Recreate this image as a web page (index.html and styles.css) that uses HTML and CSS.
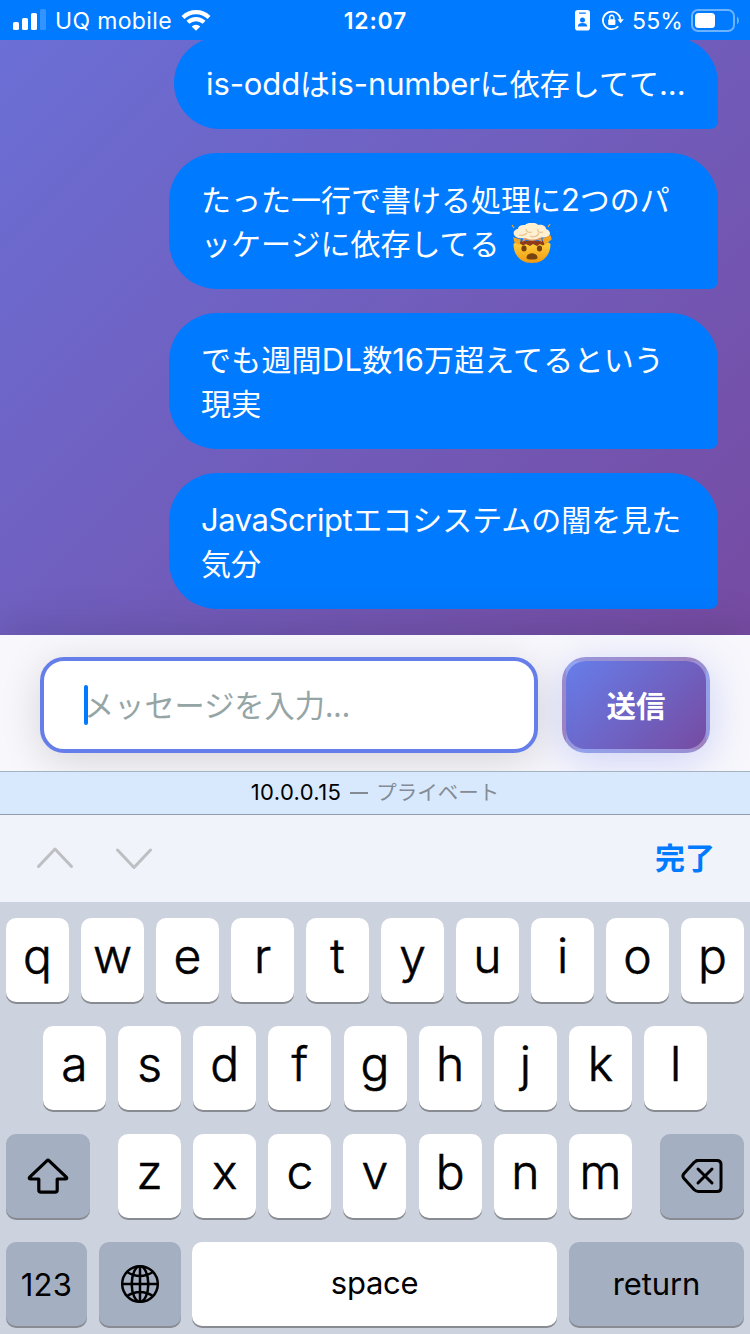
FILE: index.html
```html
<!DOCTYPE html>
<html lang="ja">
<head>
<meta charset="utf-8">
<title>Chat</title>
<link rel="stylesheet" href="styles.css">
</head>
<body>
<div class="phone">
  <header class="status">
    <div class="status-left">
      <svg class="signal" width="34" height="22" viewBox="0 0 34 22" fill="#fff"><rect x="0" y="13" width="6" height="8" rx="1.6"/><rect x="9" y="9" width="6" height="12" rx="1.6"/><rect x="18" y="4" width="6" height="17" rx="1.6"/><rect x="27" y="0" width="6" height="21" rx="1.6" opacity=".2"/></svg>
      <span class="carrier">UQ mobile</span>
      <svg class="wifi" width="30" height="23" viewBox="0 0 30 23" fill="none" stroke="#fff" stroke-width="4.2"><path d="M2 8.4A18.7 18.7 0 0 1 28 8.4"/><path d="M6.9 13.3A11.7 11.7 0 0 1 23.1 13.3"/><path d="M10.7 17.4A6.2 6.2 0 0 1 19.3 17.4L15 21.8Z" fill="#fff" stroke="none"/></svg>
    </div>
    <span class="time">12:07</span>
    <div class="status-right">
      <svg class="card-icon" width="15" height="21" viewBox="0 0 15 21"><rect width="15" height="20.5" rx="2.8" fill="#fff"/><path d="M4.6 3.1h5.8" stroke="#007aff" stroke-width="1.4" stroke-linecap="round"/><circle cx="7.5" cy="10" r="2.5" fill="#007aff"/><path d="M2.8 16.6c0-2.7 2-3.6 4.7-3.6s4.7.9 4.7 3.6Z" fill="#007aff"/></svg>
      <svg class="lock-icon" width="22" height="21" viewBox="0 0 22 21" fill="none" stroke="#fff" stroke-width="1.8"><path d="M16.200 16.400A8.800 8.800 0 1 1 18.500 9.500"/><path d="M15.500 9.200H21.800L18.600 13.200Z" fill="#fff" stroke="none"/><rect x="6.200" y="9.200" width="7.200" height="5.800" rx="1" fill="#fff" stroke="none"/><path d="M7.700 9.500V7.600a2.100 2.300 0 0 1 4.200 0v1.900" stroke-width="1.4"/></svg>
      <span class="percent">55%</span>
      <svg class="battery" width="48" height="23" viewBox="0 0 48 23"><rect x="1" y="1" width="42" height="21" rx="6" fill="none" stroke="#fff" stroke-opacity=".42" stroke-width="2"/><rect x="4" y="4" width="20" height="15" rx="3.5" fill="#fff"/><path d="M46 7.5c2.5 1.5 2.5 6.5 0 8Z" fill="#fff" opacity=".42"/></svg>
    </div>
  </header>

  <main class="chat">
    <div class="bubble bubble-first"><span class="latin">is-odd</span>は<span class="latin">is-number</span>に依存してて<span class="latin">...</span></div>
    <div class="bubble">たった一行で書ける処理に<span class="latin">2</span>つのパ<br>ッケージに依存してる<svg class="emoji" role="img" aria-label="🤯" viewBox="0 0 42 42"><defs><linearGradient id="face" x2="0" y2="1"><stop stop-color="#ffd13b"/><stop offset="1" stop-color="#f09a13"/></linearGradient></defs><path d="M2.500 21Q5 18 9 20h24q4-2 6.500 1c0 12-8 19-18.500 19S2.500 33 2.500 21Z" fill="url(#face)"/><path d="M8 20l3-2.500 4 .5 6-1 6 1 4-.5 4 2.500-3 2.500-3-1.500-3 2-4-2-3 2-4-2-3 1.500Z" fill="#8d3b1a"/><path d="M13 13h17l1 6-4-2-6 1-6-1-4 2Z" fill="#d99a6a"/><path d="M5 14c-5-4-1-8 2-8 0-4 5-4 7-4 3-3 11-3 13 0 4-1 8 1 8 4 4 1 6 6 1 8-3 1-6 0-8 1-4 2-10 2-13 0-3 0-7 1-10-1Z" fill="#fff0d2"/><path d="M8 12c3 1 6 0 8-2m3 3c4 2 8 0 9-3M15 6c0 3 3 4 6 3m6-3c-1 3 2 4 5 3" fill="none" stroke="#e6c38f" stroke-width="1.200"/><path d="M3 15l6 2-1 4-4-2Zm36-2-7 3 2 5 6-5ZM1 2l2 3m36-4-2 3" fill="#f4a521" stroke="#f4a521" stroke-width="1.300"/><ellipse cx="13" cy="25.500" rx="2.600" ry="3" fill="#76410f"/><ellipse cx="28.500" cy="25.500" rx="2.600" ry="3" fill="#76410f"/><path d="M15.500 35c0-6.500 11-6.500 11 0 0 2-11 2-11 0Z" fill="#77420f"/></svg></div>
    <div class="bubble bubble-loose">でも週間<span class="latin l-dl">DL</span>数<span class="latin">16</span>万超えてるという<br>現実</div>
    <div class="bubble"><span class="latin l-js">JavaScript</span>エコシステムの闇を見た<br>気分</div>
  </main>

  <section class="composer">
    <div class="field"><span class="placeholder">メッセージを入力...</span><i class="caret"></i></div>
    <button class="send">送信</button>
  </section>

  <div class="address"><span class="host">10.0.0.15</span><span class="private"><i class="dash"></i>プライベート</span></div>

  <div class="accessory">
    <svg width="118" height="24" viewBox="0 0 118 24" fill="none" stroke="#bdbfc2" stroke-width="3" stroke-linecap="round" stroke-linejoin="round"><path d="M2.500 19.500 19 2l16.500 17.500M81.500 3 98 20.500 114.500 3"/></svg>
    <span class="done">完了</span>
  </div>

  <div class="keyboard">
    <div class="row"><b class="key">q</b><b class="key">w</b><b class="key">e</b><b class="key">r</b><b class="key">t</b><b class="key">y</b><b class="key">u</b><b class="key">i</b><b class="key">o</b><b class="key">p</b></div>
    <div class="row row-mid"><b class="key">a</b><b class="key">s</b><b class="key">d</b><b class="key">f</b><b class="key">g</b><b class="key">h</b><b class="key">j</b><b class="key">k</b><b class="key">l</b></div>
    <div class="row row-low">
      <b class="key dark wide"><svg width="42" height="36" viewBox="0 0 42 36" fill="none" stroke="#000" stroke-width="3.200" stroke-linejoin="round"><path d="M19.800 2.800Q21 1.600 22.200 2.800L39.300 19.200Q40.500 21 38.300 21H30.200V32Q30.200 34.200 28 34.200H14Q11.800 34.200 11.800 32V21H3.700Q1.500 21 2.700 19.200Z"/></svg></b>
      <div class="letters"><b class="key">z</b><b class="key">x</b><b class="key">c</b><b class="key">v</b><b class="key">b</b><b class="key">n</b><b class="key">m</b></div>
      <b class="key dark wide"><svg width="42" height="36" viewBox="0 0 42 36" fill="none" stroke="#000" stroke-width="3" stroke-linecap="round" stroke-linejoin="round"><path d="M15.500 2.500H36Q40 2.500 40 6.500V29.500Q40 33.500 36 33.500H17.500Q15 33.500 13 31.500L2.800 20.200Q1 18 2.800 15.800L13 4.500Q15 2.500 17.500 2.500Z"/><path d="M17 11 31 25M31 11 17 25"/></svg></b>
    </div>
    <div class="row row-bottom">
      <b class="key dark digits">123</b>
      <b class="key dark globe"><svg width="40" height="40" viewBox="0 0 40 40" fill="none" stroke="#000" stroke-width="2.500"><circle cx="20" cy="20" r="17.800"/><ellipse cx="20" cy="20" rx="8.300" ry="17.800"/><path d="M20 2V38M2 20H38M7 8Q20 16 33 8M7 32Q20 24 33 32"/></svg></b>
      <b class="key space">space</b>
      <b class="key dark return">return</b>
    </div>
  </div>
</div>
</body>
</html>
```
FILE: styles.css
```css
* { box-sizing: border-box; }
body { margin: 0; font-family: Inter, "Noto Sans CJK JP", sans-serif; }
svg { display: block; flex: none; }
.phone { width: 750px; height: 1334px; overflow: hidden; display: flex; flex-direction: column; }

.status { flex: none; height: 40px; background: #007aff; color: #fff; display: grid; grid-template-columns: 1fr auto 1fr; align-items: center; padding: 0 11px 0 13px; font-size: 23px; line-height: 40px; z-index: 1; }
.status-left, .status-right { display: flex; align-items: center; }
.status-right { justify-content: flex-end; }
.carrier { margin-left: 8px; letter-spacing: .35px; padding-top: 2px; line-height: 38px; }
.wifi { margin-left: 9px; }
.time { font-weight: 600; letter-spacing: .8px; padding-top: 2px; line-height: 38px; margin-right: 1px; }
.lock-icon { margin-left: 12px; }
.percent { margin: 0 8px; padding-top: 2px; line-height: 38px; letter-spacing: .15px; }

.chat { flex: none; height: 595px; padding: 0 32px; display: flex; flex-direction: column; align-items: flex-end; gap: 24px; background: linear-gradient(135deg, #6b6fd6, #764ba2); }
.bubble { flex: none; width: 549px; height: 136px; padding: 23px 32px 25px; border-radius: 48px 48px 8px 48px; background: #007aff; color: #fff; font-family: "Noto Sans CJK JP", sans-serif; font-size: 30px; line-height: 44px; white-space: nowrap; }
.bubble-first { width: 544px; height: 92px; margin-top: -3px; }
.bubble-loose { letter-spacing: .2px; }
.latin { font-family: Inter, sans-serif; font-size: 31px; line-height: 1; letter-spacing: -.1px; }
.l-dl { letter-spacing: .2px; }
.l-js { letter-spacing: -.45px; }
.emoji { display: inline-block; width: 42px; height: 42px; margin: -8px 0 -4px 11px; vertical-align: -6px; }

.composer { flex: none; height: 136px; padding: 22px 40px 18px; display: flex; gap: 24px; background: #f8f7fc; overflow: hidden; box-shadow: 0 -8px 40px rgba(0,0,0,.12); }
.field { position: relative; width: 498px; height: 96px; border: 4px solid #667eea; border-radius: 24px; background: #fff; padding: 0 40px; box-shadow: 0 8px 40px rgba(0,0,0,.14); }
.placeholder { display: block; font: 30.200px/86px "Noto Sans CJK JP", sans-serif; color: #95a5a6; }
.caret { position: absolute; left: 40px; top: 24px; width: 4px; height: 40px; border-radius: 2px; background: #007aff; }
.send { width: 148px; height: 96px; padding: 0; border: 4px solid rgba(255,255,255,.3); border-radius: 24px; background: linear-gradient(135deg, #667eea, #764ba2); color: #fff; font: 700 29.500px/1 "Noto Sans CJK JP", sans-serif; box-shadow: 0 8px 40px rgba(102,126,234,.3); }

.address { flex: none; height: 44px; border-top: 1px solid #a5b2c2; border-bottom: 1px solid #929dac; background: #d8e9fe; display: flex; justify-content: center; align-items: center; gap: 9px; font-size: 22px; padding-bottom: 2px; z-index: 1; }
.host { color: #000; letter-spacing: .35px; }
.private { display: flex; align-items: center; gap: 8px; font-family: "Noto Sans CJK JP", sans-serif; font-size: 20.500px; line-height: 28px; padding-bottom: 2px; color: #858b95; }
.dash { width: 18px; height: 2px; margin-top: 4px; background: #858b95; }

.accessory { flex: none; height: 87px; padding: 0 35px 0 36px; background: #f0f3f9; display: flex; align-items: center; justify-content: space-between; }
.done { color: #007aff; font: 700 30px/1 "Noto Sans CJK JP", sans-serif; padding-bottom: 5px; }

.keyboard { flex: none; height: 432px; padding: 16px 6px 8px; background: #ccd3de; display: flex; flex-direction: column; gap: 24px; }
.row { display: flex; justify-content: space-between; height: 84px; }
.row-mid { padding: 0 37px; }
.letters { display: flex; justify-content: space-between; width: 514px; }
.key { display: flex; align-items: center; justify-content: center; width: 63px; height: 84px; padding-bottom: 9px; border-radius: 10px; background: #fff; box-shadow: 0 2px 0 #888b91; color: #000; font-size: 48px; font-weight: 300; line-height: 75px; -webkit-text-stroke: .6px #000; }
.dark { background: #a4afc1; }
.wide { width: 84px; padding: 0; }
.digits, .space, .return { font-size: 31px; font-weight: 400; -webkit-text-stroke: 0; }
.digits { width: 81px; padding: 0; letter-spacing: .3px; }
.row-bottom { justify-content: flex-start; }
.globe { width: 82px; margin-left: 12px; padding: 0; }
.space { width: 365px; margin-left: 11px; padding-bottom: 4px; letter-spacing: -.3px; }
.return { width: 175px; margin-left: 12px; padding-bottom: 2px; letter-spacing: -.1px; }
```
